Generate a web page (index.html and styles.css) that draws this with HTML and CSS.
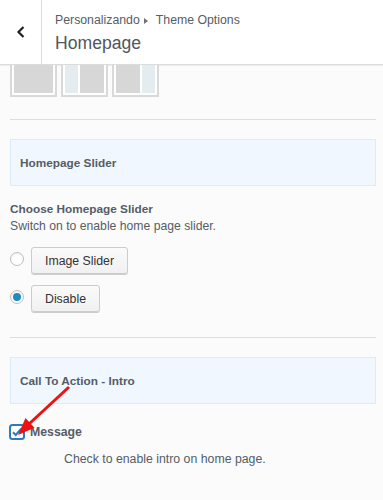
FILE: index.html
```html
<!DOCTYPE html>
<html>
<head>
<meta charset="utf-8">
<link rel="stylesheet" href="styles.css">
</head>
<body>
<header class="hdr">
  <div class="back">
    <svg width="10" height="12" viewBox="0 0 10 12"><path d="M7.5 1 L2.5 6 L7.5 11" fill="none" stroke="#1d2327" stroke-width="2.2"/></svg>
  </div>
  <div class="titles">
    <div class="crumb">Personalizando<span class="sep"></span>Theme Options</div>
    <h1 class="title">Homepage</h1>
  </div>
</header>
<main class="panel">
  <div class="layouts">
    <div class="thumb"><div class="t-main"></div></div>
    <div class="thumb"><div class="t-side"></div><div class="t-main"></div></div>
    <div class="thumb"><div class="t-main"></div><div class="t-side"></div></div>
  </div>
  <hr class="rule rule-first">
  <div class="section-box">Homepage Slider</div>
  <div class="control">
    <div class="ctl-title">Choose Homepage Slider</div>
    <div class="ctl-desc">Switch on to enable home page slider.</div>
    <div class="radio-row"><span class="radio"></span><span class="btn btn-wide">Image Slider</span></div>
    <div class="radio-row"><span class="radio checked"></span><span class="btn">Disable</span></div>
  </div>
  <hr class="rule">
  <div class="section-box">Call To Action - Intro</div>
  <div class="check-row">
    <svg class="checkbox" width="16" height="16" viewBox="0 0 16 16"><rect x="1" y="1" width="14" height="14" rx="2.5" fill="#fff" stroke="#2f7bbd" stroke-width="2"/><path d="M4 8.2 L6.8 11 L12.2 4.6" fill="none" stroke="#2f7bbd" stroke-width="2"/></svg>
    <span class="check-label">Message</span>
  </div>
  <div class="check-desc">Check to enable intro on home page.</div>
  <hr class="rule">
  <svg class="arrow" width="80" height="64" viewBox="0 0 80 64"><line x1="69" y1="7" x2="29" y2="44" stroke="#ee1111" stroke-width="3"/><polygon points="18,55 25.5,38 34.5,47.7" fill="#ee1111"/></svg>
</main>
</body>
</html>
```
FILE: styles.css
```css
html, body { margin: 0; padding: 0; }
body {
  width: 383px;
  height: 500px;
  overflow: hidden;
  background: #fbfbfb;
  font-family: "Liberation Sans", Arial, sans-serif;
  color: #555d66;
  position: relative;
}
.hdr {
  display: flex;
  height: 64px;
  background: #fff;
  border-bottom: 1px solid #dcdcdc;
  box-shadow: 0 1px 0 #ececec;
}
.back {
  width: 41px;
  border-right: 1px solid #ddd;
  display: flex;
  align-items: center;
  justify-content: center;
}
.titles {
  padding: 13px 0 0 13px;
}
.crumb {
  font-size: 12.3px;
  line-height: 14px;
  color: #555d66;
  display: flex;
  align-items: center;
}
.sep {
  display: inline-block;
  width: 0;
  height: 0;
  border-left: 4px solid #6b7178;
  border-top: 3px solid transparent;
  border-bottom: 3px solid transparent;
  margin: 1px 8px 0 4px;
}
.title {
  margin: 6px 0 0;
  font-size: 17.6px;
  line-height: 20px;
  font-weight: normal;
  color: #50575e;
}
.panel {
  padding: 0 7px 0 10px;
}
.layouts {
  display: flex;
  gap: 4px;
  height: 32px;
  align-items: flex-end;
  overflow: hidden;
}
.thumb {
  width: 39px;
  height: 42px;
  border: 2px solid #d9d9d9;
  padding: 2px;
  background: #fff;
  display: flex;
  gap: 2px;
  flex-shrink: 0;
}
.t-main { flex: 1; background: #d7d7d7; }
.t-side { width: 13px; background: #e5ecef; }
.rule {
  border: 0;
  border-top: 1px solid #dedede;
  margin: 0;
}
.rule-first { margin-top: 22px; }
.section-box {
  margin-top: 19px;
  height: 45px;
  background: #f0f7fe;
  border: 1px solid #dbebf8;
  padding-left: 9px;
  display: flex;
  align-items: center;
  font-size: 11.8px;
  font-weight: bold;
  color: #555d66;
}
.control { padding-top: 15px; padding-bottom: 25px; }
.ctl-title {
  font-size: 11.8px;
  font-weight: bold;
  line-height: 16px;
}
.ctl-desc {
  font-size: 12.2px;
  line-height: 18px;
}
.radio-row {
  display: flex;
  align-items: center;
  margin-top: 12px;
}
.radio-row + .radio-row { margin-top: 11px; }
.radio {
  width: 12px;
  height: 12px;
  border: 1px solid #bbbfc3;
  border-radius: 50%;
  background: #fff;
  box-shadow: inset 0 1px 2px rgba(0,0,0,.08);
  margin: 0 7px 4px 0;
  position: relative;
  box-sizing: content-box;
}
.radio.checked::after {
  content: "";
  position: absolute;
  left: 2px;
  top: 2px;
  width: 8px;
  height: 8px;
  border-radius: 50%;
  background: #1e8cbe;
}
.btn {
  display: inline-flex;
  align-items: center;
  height: 25px;
  padding: 0 13px;
  border: 1px solid #cccccc;
  border-radius: 3px;
  background: linear-gradient(#fafafa, #f1f1f1);
  box-shadow: 0 1px 0 #ccc;
  font-size: 12.3px;
  color: #333;
}
.check-row {
  display: flex;
  align-items: center;
  margin-top: 20px;
}
.checkbox { margin: 0 5px 0 -1px; }
.check-label {
  font-size: 12.3px;
  font-weight: bold;
  color: #555d66;
}
.check-desc {
  padding-left: 54px;
  margin-top: 10px;
  font-size: 12.3px;
  line-height: 18px;
  margin-bottom: 32px;
}
.arrow {
  position: absolute;
  left: 0;
  top: 380px;
}
```
